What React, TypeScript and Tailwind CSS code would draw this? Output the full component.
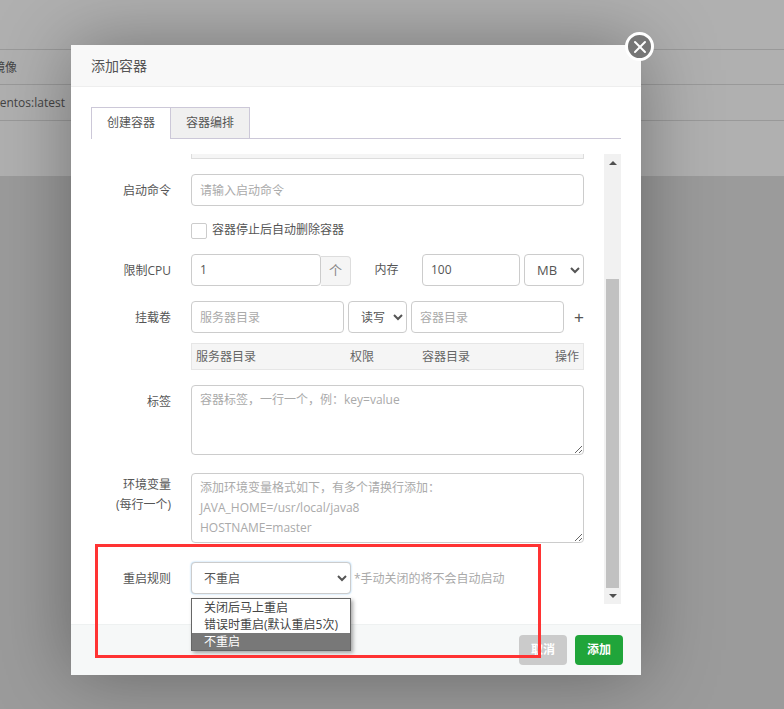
import React from 'react';
import { X } from 'lucide-react';

const fieldClass = 'h-8 shrink-0 rounded-sm border border-[#ccc] bg-white px-2 text-xs text-[#555] outline-none placeholder:text-[#aaa]';
const selectClass = 'h-8 shrink-0 rounded-sm border border-[#ccc] bg-white text-xs text-[#555] outline-none';

function Label({ children }: { children: React.ReactNode }) {
  return <div className="h-8 w-20 shrink-0 text-right text-xs leading-[34px] text-[#555]">{children}</div>;
}

function Background() {
  return (
    <div className="bg-[#b0b0b0] pt-[49px]">
      <div className="h-[127px] text-xs text-[#444]">
        <div className="h-[35px] border-t border-[#999] leading-9">
          <span className="-ml-[7px] inline-block">镜像</span>
        </div>
        <div className="h-9 border-t border-[#999] leading-9">
          <span className="-ml-[6px] inline-block">centos:latest</span>
        </div>
        <div className="border-t border-[#999]" />
      </div>
    </div>
  );
}

function Form() {
  return (
    <div className="min-w-0 flex-1">
      <div className="ml-[100px] h-[5px] w-[393px] border-x border-b border-[#ddd] bg-[#f5f5f5]" />

      <div className="mt-[15px] flex gap-5">
        <Label>启动命令</Label>
        <input className={`${fieldClass} w-[393px]`} placeholder="请输入启动命令" readOnly />
      </div>

      <label className="mt-[17px] ml-[100px] flex h-4 items-start gap-[5px] text-xs leading-[14px] text-[#555]">
        <span className="h-4 w-4 rounded-[2px] border border-[#ccc] bg-white" />
        容器停止后自动删除容器
      </label>

      <div className="mt-[15px] flex gap-5">
        <Label>限制CPU</Label>
        <div className="flex w-[393px] items-start">
          <input className={`${fieldClass} w-[130px] pb-0.5`} defaultValue="1" readOnly />
          <div className="mt-0.5 flex h-[30px] w-[30px] items-center justify-center rounded-r-sm border border-l-0 border-[#ddd] bg-[#f5f5f5] text-[13px] text-[#888]">个</div>
          <div className="w-[71px] text-center text-xs leading-8 text-[#555]">内存</div>
          <input className={`${fieldClass} w-[98px] pb-0.5`} defaultValue="100" readOnly />
          <select className={`${selectClass} ml-1 w-[60px] pl-2 text-[13px]`} defaultValue="MB">
            <option>MB</option>
            <option>GB</option>
          </select>
        </div>
      </div>

      <div className="mt-[15px] flex gap-5">
        <Label>挂载卷</Label>
        <div className="flex w-[393px] items-center gap-1">
          <input className={`${fieldClass} w-[153px]`} placeholder="服务器目录" readOnly />
          <select className={`${selectClass} w-[59px] pl-2`} defaultValue="读写">
            <option>读写</option>
            <option>只读</option>
          </select>
          <input className={`${fieldClass} w-[153px]`} placeholder="容器目录" readOnly />
          <span className="ml-1.5 font-['Liberation_Sans',sans-serif] text-[17px] leading-none text-[#555]">+</span>
        </div>
      </div>

      <div className="mt-2.5 ml-[100px] flex h-[27px] w-[393px] items-center border border-[#e6e6e6] bg-[#f5f5f5] px-1 text-xs text-[#666]">
        <span className="w-[154px]">服务器目录</span>
        <span className="w-[72px]">权限</span>
        <span className="flex-1">容器目录</span>
        <span>操作</span>
      </div>

      <div className="mt-[15px] flex gap-5">
        <Label>标签</Label>
        <textarea
          className={`${fieldClass} h-[70px] w-[393px] pt-1 leading-5`}
          placeholder="容器标签，一行一个，例：key=value"
          readOnly
        />
      </div>

      <div className="mt-[18px] flex gap-5">
        <div className="w-20 shrink-0 pt-0.5 text-right text-xs leading-5 text-[#555]">
          环境变量
          <br />
          (每行一个)
        </div>
        <textarea
          className={`${fieldClass} h-[70px] w-[393px] pt-1 leading-5`}
          placeholder={'添加环境变量格式如下，有多个请换行添加：\nJAVA_HOME=/usr/local/java8\nHOSTNAME=master'}
          readOnly
        />
      </div>

      <div className="mt-[19px] flex gap-5">
        <Label>重启规则</Label>
        <select className={`${selectClass} w-40 border-[#5fb0ee] pl-2 shadow-[0_0_2px_rgba(82,168,236,0.6)]`} defaultValue="不重启">
          <option>关闭后马上重启</option>
          <option>错误时重启(默认重启5次)</option>
          <option>不重启</option>
        </select>
        <span className="-ml-[17px] text-xs leading-[34px] text-[#aaa]">*手动关闭的将不会自动启动</span>
      </div>
    </div>
  );
}

function Scrollbar() {
  return (
    <div className="flex h-[450px] w-[17px] shrink-0 flex-col bg-[#f1f1f1]">
      <div className="flex h-[17px] items-center justify-center">
        <div className="h-0 w-0 border-x-[4px] border-b-[4px] border-x-transparent border-b-[#505050]" />
      </div>
      <div className="mx-0.5 mt-[108px] h-[309px] bg-[#c1c1c1]" />
      <div className="flex h-[16px] items-center justify-center">
        <div className="h-0 w-0 border-x-[4px] border-t-[4px] border-x-transparent border-t-[#505050]" />
      </div>
    </div>
  );
}

export default function App() {
  return (
    <div className="relative h-[709px] w-[784px] overflow-hidden bg-[#9b9b9b] font-['Open_Sans','Noto_Sans_CJK_SC',sans-serif]">
      <Background />

      <div className="absolute top-[45px] left-[71px] flex h-[630px] w-[570px] flex-col bg-white shadow-[0_0_70px_rgba(0,0,0,0.35)]">
        <div className="h-[42px] border-b border-[#eee] bg-[#f8f8f8] pl-5 text-sm leading-[41px] text-[#555]">添加容器</div>

        <div className="flex min-h-0 flex-1 flex-col px-5 pt-5">
          <div className="flex h-8 border-b border-[#ccc8d8]">
            <div className="h-8 w-20 border-x border-t border-[#ccc8d8] bg-white text-center text-xs leading-[30px] text-[#555]">创建容器</div>
            <div className="h-[31px] w-[79px] border-t border-r border-[#ccc8d8] bg-[#f0f0f0] text-center text-xs leading-[30px] text-[#555]">容器编排</div>
          </div>
          <div className="mt-[15px] flex h-[450px] overflow-hidden">
            <Form />
            <Scrollbar />
          </div>
        </div>

        <div className="flex h-[51px] items-start justify-end gap-2 border-t border-[#eef1f1] bg-[#f6f8f8] pt-2.5 pr-[18px]">
          <button className="h-[30px] w-12 rounded-sm bg-[#cbcbcb] text-xs font-bold text-white">取消</button>
          <button className="h-[30px] w-12 rounded-sm bg-[#20a53a] text-xs font-bold text-white">添加</button>
        </div>

        {/* opened native dropdown */}
        <div className="absolute top-[553px] left-[120px] w-40 border border-[#666] bg-white text-xs leading-[17px] text-[#444] shadow-[2px_2px_4px_rgba(0,0,0,0.35)]">
          <div className="pl-3">关闭后马上重启</div>
          <div className="pl-3">错误时重启(默认重启5次)</div>
          <div className="bg-[#787878] pl-3 text-white">不重启</div>
        </div>

        <div className="absolute -top-[13px] -right-[13px] flex h-[29px] w-[29px] items-center justify-center rounded-full border-[3px] border-white bg-[#767676] text-white">
          <X size={20} strokeWidth={2.4} />
        </div>
      </div>

      {/* annotation */}
      <div className="absolute top-[544px] left-[95px] h-[114px] w-[446px] border-[3px] border-[#ff3333]" />
    </div>
  );
}
